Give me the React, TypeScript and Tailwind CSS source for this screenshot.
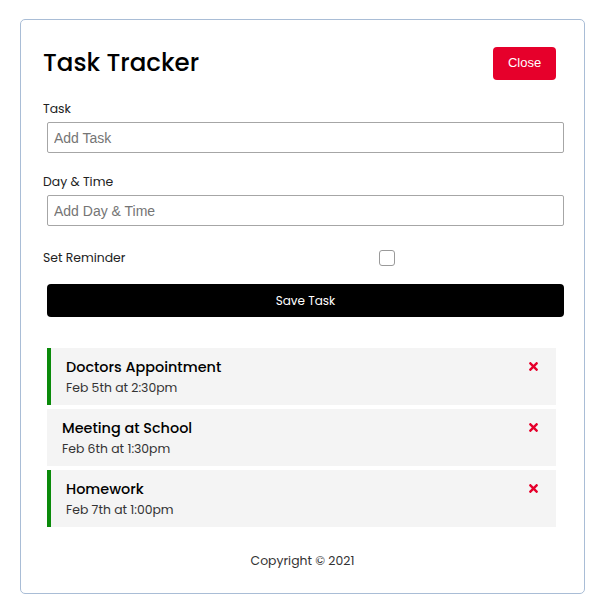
import { FaTimes } from 'react-icons/fa';

const tasks = [
  { id: 1, text: 'Doctors Appointment', day: 'Feb 5th at 2:30pm', reminder: true },
  { id: 2, text: 'Meeting at School', day: 'Feb 6th at 1:30pm', reminder: false },
  { id: 3, text: 'Homework', day: 'Feb 7th at 1:00pm', reminder: true },
];

const App = () => {
  return (
    <div className="min-h-[609px] bg-white pt-[19px] font-['Poppins','Inter',sans-serif] text-[#222]">
      <div className="ml-[20px] w-[565px] rounded-[5px] border border-[#a9bdd6] px-[22px] pt-[22px] pb-[22px]">
        {/* header */}
        <header className="flex h-[42px] items-center justify-between">
          <h1 className="pt-[1px] text-[24.5px] font-medium text-black">Task Tracker</h1>
          <button className="mr-[6px] h-[33px] w-[63px] rounded-[4px] bg-[#e6002b] font-['Liberation_Sans',sans-serif] text-[13px] text-white">
            Close
          </button>
        </header>

        {/* form */}
        <form className="flex w-[516px] flex-col">
          <div className="mt-[14px] flex flex-col">
            <label className="h-[20px] text-[12.4px] leading-[22px] text-[#222]">Task</label>
            <input
              type="text"
              placeholder="Add Task"
              className="mt-[4px] ml-[4px] h-[31px] w-[517px] rounded-[2px] border border-[#a6a6a6] px-[6px] font-['Liberation_Sans',sans-serif] text-[14px] placeholder:text-[#757575]"
            />
          </div>
          <div className="mt-[18px] flex flex-col">
            <label className="h-[20px] text-[12.4px] leading-[22px] text-[#222]">Day &amp; Time</label>
            <input
              type="text"
              placeholder="Add Day & Time"
              className="mt-[4px] ml-[4px] h-[31px] w-[517px] rounded-[2px] border border-[#a6a6a6] px-[6px] font-['Liberation_Sans',sans-serif] text-[14px] placeholder:text-[#757575]"
            />
          </div>
          <div className="mt-[22px] flex h-[20px] items-center">
            <label className="flex-1 text-[12.4px] leading-[20px] text-[#222]">Set Reminder</label>
            <div className="flex flex-[2] justify-center">
              <span className="block h-[16px] w-[16px] rounded-[3px] border border-[#9a9a9a] bg-white" />
            </div>
          </div>
          <button
            type="button"
            className="mt-[16px] ml-[4px] h-[33px] w-[517px] rounded-[4px] bg-black text-[12px] text-white"
          >
            Save Task
          </button>
        </form>

        {/* tasks */}
        <div className="mt-[31px] ml-[4px] flex w-[509px] flex-col gap-[4px]">
          {tasks.map((task) => (
            <div
              key={task.id}
              className={`flex items-start justify-between bg-[#f4f4f4] py-[8px] pr-[16px] ${
                task.reminder ? 'border-l-[4px] border-[#0a8a0a] pl-[15px]' : 'pl-[15px]'
              }`}
            >
              <div>
                <h3 className="text-[14.4px] font-medium leading-[22px] text-black">{task.text}</h3>
                <p className="text-[12.4px] leading-[19px] text-[#333]">{task.day}</p>
              </div>
              <FaTimes className="mt-[4px] text-[#e6002b]" size={13} />
            </div>
          ))}
        </div>

        <footer className="mt-[24px] text-center text-[12.4px] leading-[20px] text-[#333]">
          Copyright &copy; 2021
        </footer>
      </div>
    </div>
  );
};

export default App;
